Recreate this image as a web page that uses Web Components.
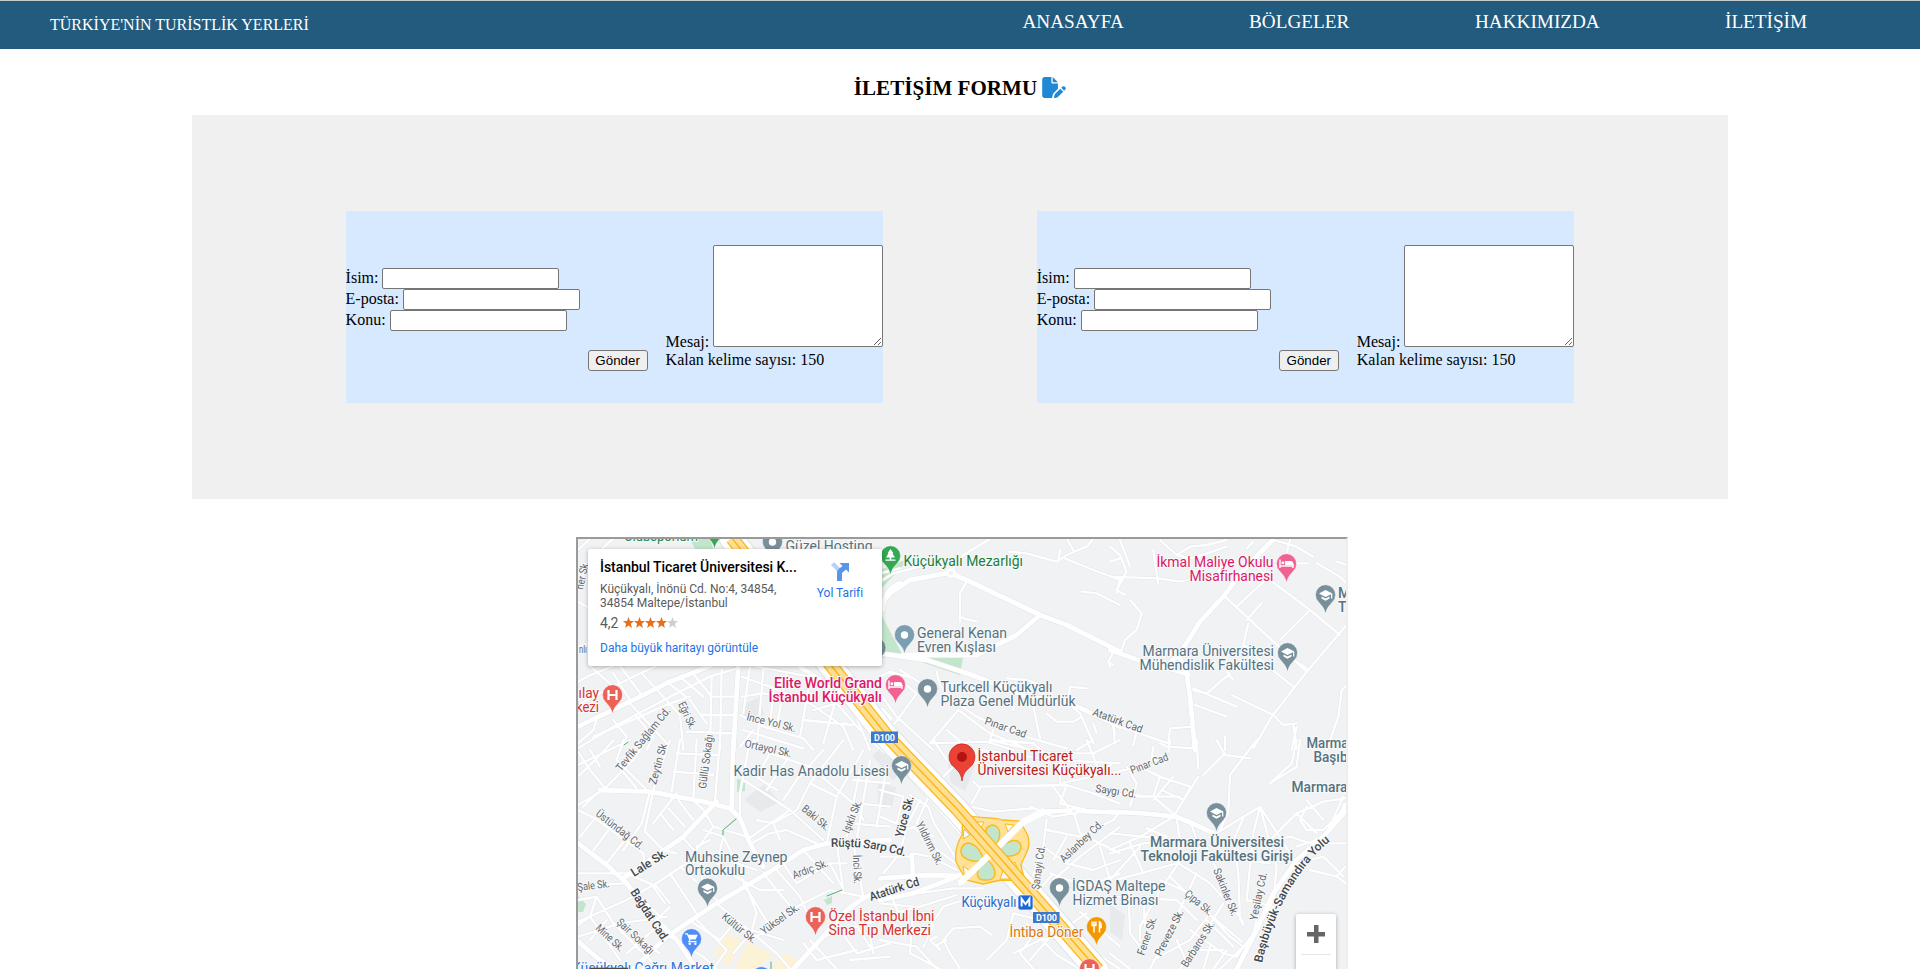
<!DOCTYPE html>
<html lang="tr">
<head>
<meta charset="utf-8">
<title>İletişim</title>
<style>
html,body{margin:0;padding:0;height:100%;overflow:hidden;background:#fff;font-family:"Liberation Serif",serif;font-size:16px}
</style>
</head>
<body>
<contact-page></contact-page>
<script>
const define = (name, html, setup) => customElements.define(name, class extends HTMLElement {
  connectedCallback() {
    if (this.shadowRoot) return;
    const t = document.createElement('template');
    t.innerHTML = typeof html === 'function' ? html(this) : html;
    this.attachShadow({ mode: 'open' }).appendChild(t.content.cloneNode(true));
    if (setup) setup(this);
  }
});

define('nav-link', `<style>:host{display:block}a{color:#fff;text-decoration:none;font-size:19.2px;line-height:22px;white-space:nowrap}</style><a><slot></slot></a>`);

define('site-header', `<style>
:host{display:flex;box-sizing:border-box;height:49px;background:#235b7e;border-top:1px solid #c4cccb;color:#fff;justify-content:space-between;align-items:flex-start}
.brand{margin:15px 0 0 50px;font-size:16px;line-height:18px;white-space:nowrap}
nav{display:grid;grid-template-columns:226.5px 226px 250px 195px;margin-top:10px}
</style><div class="brand">TÜRKİYE'NİN TURİSTLİK YERLERİ</div>
<nav><nav-link>ANASAYFA</nav-link><nav-link>BÖLGELER</nav-link><nav-link>HAKKIMIZDA</nav-link><nav-link>İLETİŞİM</nav-link></nav>`);

define('form-title', `<style>
:host{display:flex;justify-content:center;align-items:flex-start;gap:5px;height:66px;box-sizing:border-box;padding-top:27px}
h1{margin:0;font-size:21px;line-height:24px;font-weight:700;color:#000;letter-spacing:.05px}
svg{display:block;margin-top:1px}
</style><h1><slot></slot></h1>
<svg width="24" height="21" viewBox="0 0 576 512" fill="#2089d3"><path d="M0 64C0 29 29 0 64 0h160v128c0 18 14 32 32 32h128v126l-102 102a80 80 0 0 0-20 34l-19 74a30 30 0 0 0 1 16H64c-35 0-64-29-64-64z"/><path d="M256 0v128h128z"/><path d="M550 235c-16-15-41-15-57 0l-29 30 71 71 29-30c16-15 16-41 0-56zM312 417c-4 4-7 9-9 15l-15 60a16 16 0 0 0 20 20l60-15c6-1 11-4 15-9l130-129-72-71z"/></svg>`);

define('labeled-input', `<style>
:host{display:flex;height:21px;align-items:flex-start;line-height:18px}
input{box-sizing:border-box;width:177px;height:21px;margin:0 0 0 4px;border:1px solid #767676;border-radius:2px;background:#fff;padding:1px 2px;outline:none}
span{margin-top:1px}
</style><span><slot></slot></span><input>`);

define('contact-form', `<style>
:host{display:flex;width:537.6px;height:192px;background:#d7e9ff;color:#000;justify-content:space-between;flex:none}
.fields{margin-top:57px;width:236px}
button{box-sizing:border-box;width:60px;height:21px;margin:139px 0 0 6px;padding:0;border:1px solid #767676;border-radius:3px;background:#efefef;color:#000;font:13.333px/19px "Liberation Sans",sans-serif}
.msg{margin:34px 0 0 auto;width:217.6px}
.row{display:flex;justify-content:space-between;align-items:flex-end;height:102px}
.row span{line-height:18px;margin-bottom:-4px}
textarea{display:block;box-sizing:border-box;width:170px;height:102px;margin:0;border:1px solid #767676;border-radius:2px;background:#fff;resize:both;outline:none}
.left{line-height:18px;margin-top:4px;white-space:nowrap}
</style>
<div class="fields"><labeled-input>İsim:</labeled-input><labeled-input>E-posta:</labeled-input><labeled-input>Konu:</labeled-input></div>
<button>Gönder</button>
<div class="msg"><div class="row"><span>Mesaj:</span><textarea></textarea></div><div class="left">Kalan kelime sayısı: 150</div></div>`);

define('form-panel', `<style>
:host{display:flex;box-sizing:border-box;width:1536px;height:384px;margin:0 auto;background:#f0f0f0;justify-content:space-evenly;align-items:center}
</style><contact-form></contact-form><contact-form></contact-form>`);

/* Roads are traced in tiles: each tile has an origin on the page and a scale of three units per pixel. */
const tiles = [
 { o:[570,530], main:`M505,410L498,520L490,660 M24,590L200,505L300,455L420,408 M936,540L960,566 M690,410L810,490L880,570L960,670`,
   minor:`M24,125L80,70L130,26 M24,215L60,235 M60,26L24,60 M24,455L60,436L130,408 M24,525L80,495L210,430L260,408 M24,655L130,590L300,500L420,440L500,415 M60,408L130,470 M150,408L215,495 M215,430L330,555L340,660 M180,520L290,640 M290,455L360,510L410,580 M330,440L400,500 M365,425L425,500 M425,440L420,660 M455,420L450,660 M420,500L500,500 M300,520L360,500 M395,555L500,555 M350,605L495,610 M24,640L70,600L80,570 M180,510L130,430 M70,620L210,560L300,520 M560,410L720,440L850,540L900,660 M515,440L600,470L720,520L820,590L850,660 M515,500L580,490L650,500 M510,555L580,590L700,625L730,660 M520,600L700,655 M580,420L560,660 M650,430L620,590 M720,450L690,620 M800,500L760,640 M730,540L800,520L870,600 M700,570L850,585 M610,480L600,590 M510,650L550,600 M24,350L54,340 M130,570L170,620L150,660 M200,560L250,620L230,660 M860,530L910,620 M540,410L520,550` },
 { o:[880,530], main:`M0,225L30,190L90,150L210,128L260,150L480,255L560,285L720,365 M0,370L140,390L290,440L440,500L560,515L720,590 M480,255L410,315L290,375L70,375 M8,240Q10,180 60,160`,
   minor:`M330,26L250,75L215,125 M260,155L240,190L240,275 M240,262L290,275 M385,65L440,70L530,95L560,75L620,50L640,26 M540,60L535,95 M560,26L580,60 M555,85L640,120L720,150 M605,185L650,190L720,225 M690,95L720,85 M720,145L710,190 M700,365L685,395L690,410 M170,425L180,465L210,505L290,560L400,610L560,655 M30,425L60,450L110,490L60,560L20,610 M380,445L440,450L500,470 M460,530L480,625 M570,470L565,520L600,550L640,640 M570,470L620,475 M500,550L530,575L580,575L605,560 M640,580L650,610 M0,490L50,560L160,660 M0,540L100,660 M235,540L150,640L320,635L400,660 M235,540L330,610L450,660 M340,600L330,630L460,640 M200,600L260,650 M0,155L40,130L120,110 M0,130L60,115 M400,475L400,540 M60,420L170,490 M0,440L30,425L100,445 M700,590L705,640` },
 { o:[1110,530], main:`M490,28L400,120L340,200L270,275L210,370L180,400 M0,360L100,395L230,430L240,500L255,660 M210,385L235,435`,
   minor:`M0,50L30,75L50,125L20,180L45,195 M0,140L145,145L210,155L320,130L350,95 M130,60L135,100L145,160 M150,30L200,75L240,50L290,45L350,30 M200,75L240,85L290,70L350,50 M30,30L60,110 M60,210L95,250L80,300L45,330L35,360 M380,230L450,165L490,130 M345,200L490,335L590,425 M440,110L480,150L600,240L690,315 M600,240L510,330 M710,285L590,425L485,560L430,655 M410,270L455,220 M415,280L400,345L470,375 M490,335L550,390L590,415 M400,350L550,470 M250,475L380,530 M250,480L290,490L360,430 M365,495L490,555L520,585L560,580 M255,525L350,560 M550,585L560,655 M250,590L180,595L175,640L0,580 M10,590L15,610 M80,605L70,645 M150,640L170,650L255,655 M345,620L345,660 M710,465L695,480L685,560L650,660 M490,30L560,50L610,80 M540,30L530,70 M430,35L410,55 M620,100L690,140L710,160 M680,95L710,105 M350,425L370,450 M560,100L595,100 M0,400L10,405 M560,590L545,660` },
 { o:[570,740], main:`M24,310L110,375L170,430L240,520L320,600L380,687 M90,150L240,155L400,185L480,205L510,235L540,310L580,380 M440,185L340,290L160,415 M490,0L485,200 M960,300L770,310L700,330L600,395L440,490L290,590L190,687 M24,605L90,660L130,687 M960,435L880,475L830,510L760,590L670,687`,
   minor:`M24,110L100,35L130,0 M24,35L60,90L110,150 M24,75L180,0 M24,195L100,150L190,60L230,0 M24,210L75,235L220,340L225,390 M75,235L30,290 M120,265L70,330 M165,300L110,370 M40,200L80,160 M60,30L90,80 M160,0L140,60L230,150 M150,85L200,145 M240,155L215,250L160,330 M300,0L250,150L225,270 M320,160L250,250 M270,220L310,270 M225,275L280,330 M325,180L370,240 M295,205L345,260 M365,175L400,210 M380,0L370,170 M450,0L435,185 M320,40L440,45 M310,95L430,105 M330,0L305,155 M540,0L510,160L510,225 M520,120L600,170L660,210L760,300 M550,0L600,40L720,80L850,190L880,240 M600,40L560,110 M650,60L590,150 M700,90L640,180 M560,110L620,150 M760,30L690,110 M820,0L720,130L680,210 M880,30L800,170L770,310 M720,130L800,170 M660,210L530,300 M560,240L610,250L630,300 M610,250L680,210 M545,310L600,280L650,270L740,310 M400,210L430,260L350,370 M430,260L530,290 M400,270L460,290L500,370L560,390 M460,290L440,370L520,420 M340,295L390,350L400,460 M320,340L280,330 M380,320L420,300 M24,400L170,400L260,440L300,490 M24,440L160,430 M24,545L170,480L260,430L350,370 M24,480L80,470L130,550L260,680 M80,470L60,530L150,660 M24,555L60,530 M210,470L270,530L300,500 M160,420L260,520 M300,400L380,520 M250,440L285,490 M330,380L440,480 M440,490L500,540L620,640L660,687 M380,540L470,630L430,687 M300,590L400,650L440,687 M500,540L450,600L370,550 M550,570L490,640 M530,440L560,520L545,570L640,600 M580,400L620,450L680,520 M520,430L600,560 M440,380L570,450L640,450 M620,390L690,470L730,560 M560,590L640,520L780,450L880,470 M780,370L820,450 M700,330L790,430 M800,310L820,450 M850,310L880,470 M900,0L960,50 M870,90L830,290 M850,120L960,130 M860,190L960,200 M840,250L960,260 M900,60L860,300 M950,80L920,260 M640,370L680,430L780,370L830,370 M720,600L800,687 M760,590L860,560L960,530 M790,540L860,640L960,610 M830,510L900,620 M700,610L740,660L860,630 M24,590L150,550L290,530 M110,540L60,600 M170,640L250,570 M200,600L270,640 M840,660L960,650 M890,540L910,640` },
 { o:[880,740], main:`M240,430L350,325L430,245L490,215L570,212L720,218 M0,480L100,460L230,410L260,395 M0,415L150,405L230,408 M95,345L100,420`,
   minor:`M70,0L180,125L270,200L340,215L460,205 M0,20L60,80L160,190L240,280 M90,165L145,200L160,245L200,310L230,360 M280,125L300,145L275,190 M300,140L560,135L640,160L720,190 M0,150L70,170L50,250L0,230 M120,180L80,260L60,340 M40,290L100,260L160,320L240,380 M100,340L150,350L230,390 M150,160L110,250L160,290 M0,350L90,350 M60,340L10,400 M110,460L220,445L310,445 M0,530L120,500L230,465 M0,490L100,500L90,640L180,687 M0,600L110,620L170,687 M100,520L150,520L160,560L130,620 M250,480L190,500L150,560 M30,460L60,530 M200,600L170,615L180,630L150,600L170,590 M335,585L300,560L220,565L190,600L210,640L240,687 M320,660L380,600L400,520L560,560 M440,550L530,645L600,687 M400,640L480,600L540,590 M470,570L420,640L460,687 M510,590L450,660 M580,220L520,230L450,200 M500,240L490,320L450,430 M580,215L600,280L720,340 M500,270L600,290L700,240L720,215 M520,420L600,350L720,260 M490,320L560,370L640,390L720,360 M510,400L620,440L720,400 M470,460L520,400 M560,290L520,360 M620,280L560,370 M660,320L690,420 M560,135L540,190L640,215 M520,140L570,210 M300,30L520,60L720,70 M330,0L500,40L640,40L720,0 M590,30L640,0 M600,515L720,620 M560,560L620,520 M440,450L480,530L720,687 M210,60L270,0 M190,110L240,60 M200,60L160,0 M370,0L460,10L520,60 M540,70L540,130L640,110L700,70 M620,0L660,100 M590,630L640,687` },
 { o:[1110,740], main:`M0,215L100,220L200,230L280,265L320,285 M705,215L640,290L560,360L490,460L440,570L380,687 M705,195L690,230`,
   minor:`M320,280L400,230L450,200L560,370L640,350L670,380L700,410 M450,200L480,310L500,380L490,480L430,580L380,650 M400,235L370,300L385,400L390,540 M450,200L430,280L410,480L490,500 M500,300L540,290L600,310L650,280L700,170 M470,310L560,220L640,185L705,175 M590,200L570,240L590,270L640,270L690,220 M560,220L620,280 M590,180L640,240 M620,300L560,320 M650,310L705,310 M600,390L680,410L708,430 M705,380L680,410 M560,0L545,70L480,130 M480,130L560,80L570,0 M440,0L360,105L355,215L330,270 M345,40L280,105 M320,0L345,45L420,55 M260,0L265,85 M265,110L190,230L90,290L0,330 M0,100L90,80L150,110L240,140 M130,20L125,60L180,60 M150,110L130,170L0,160 M130,170L200,230 M155,150L220,180 M190,110L130,180 M80,170L210,170 M50,80L80,130L60,200 M240,145L220,180 M0,280L200,300 M200,235L210,300L205,370 M110,265L170,290 M240,240L260,300 M0,340L100,310L210,300 M0,420L90,320 M20,420L200,370L290,310 M60,310L100,400 M205,370L150,450L90,560L90,600 M205,370L300,430L390,530L400,550 M280,300L320,390L400,555 M150,420L240,460L360,590L400,620L330,687 M260,400L200,530L120,687 M180,410L260,490L395,605 M0,470L200,480L260,540 M55,440L60,580L90,620 M100,470L105,560 M340,490L270,600L210,687 M300,520L240,600L130,660 M200,600L240,687 M240,570L340,640L380,650 M290,540L370,620 M0,640L60,687 M300,620L280,687 M350,630L310,687 M260,630L340,630 M430,580L440,540 M480,370L400,360 M180,0L175,35 M500,510L430,500` }
];

const halo = 'paint-order="stroke" stroke="#f8f9fa" stroke-width="2.2" stroke-linejoin="round"';
const esc = s => s.replace(/&/g, '&amp;');
const label = (x, y, w, color, text, size = 14, weight = 400, rot = 0) =>
  `<text x="${x}" y="${y}" ${w ? `textLength="${w}" lengthAdjust="spacingAndGlyphs"` : ''} font-size="${size}" font-weight="${weight}" fill="${color}" ${halo} ${rot ? `transform="rotate(${rot} ${x} ${y})"` : ''}>${esc(text)}</text>`;
/* A street name runs from one point to another. */
const street = (x1, y1, x2, y2, text, bold) => {
  const w = Math.hypot(x2 - x1, y2 - y1), a = Math.atan2(y2 - y1, x2 - x1) * 180 / Math.PI;
  return label(x1, y1, w.toFixed(1), bold ? '#43474b' : '#63676b', text, bold ? 12 : 11, bold ? 500 : 400, +a.toFixed(1));
};
const glyphs = {
  dot: '<circle r="3.7" fill="#fff"/>',
  h: '<path d="M-4,-5V5M4,-5V5M-4,0H4" stroke="#fff" stroke-width="2.2" fill="none"/>',
  cap: '<path d="M0,-5L7,-1.5L0,2L-6.5,-1.5zM-4,1.4L0,3.4L4,1.4V3.6L0,5.8L-4,3.6zM5.6,-1H6.8V3.6H5.6z" fill="#fff"/>',
  bed: '<path d="M-6.5,-4.5V4M-6.5,2H6.5M6.5,4V0" stroke="#fff" stroke-width="1.4" fill="none"/><circle cx="-3.6" cy="-1.2" r="1.5" fill="#fff"/><path d="M-1.4,-3H4Q6.8,-3 6.8,0V1H-1.4z" fill="#fff"/>',
  tree: '<path d="M0,-7L3,-2.8H1.9L4.5,1.5H.8V3.5H5V4.8H-5V3.5H-.8V1.5H-4.5L-1.9,-2.8H-3z" fill="#fff"/>',
  cart: '<path d="M-3.800,-4.200H6.200L4.200,.6H-2z" fill="#fff"/><path d="M-6.500,-5.200H-4.200L-1.600,.8L-2.600,2.600H5" stroke="#fff" stroke-width="1.2" fill="none"/><circle cx="-1.800" cy="4.700" r="1.200" fill="#fff"/><circle cx="3.900" cy="4.700" r="1.200" fill="#fff"/>',
  fork: '<path d="M-4.4,-5.5V-1.5H-.6V-5.5M-2.5,-5.5V5.5M3,5.5V-5Q5,-4 4.6,.6H3" stroke="#fff" stroke-width="1.5" fill="none"/>',
  none: ''
};
const pin = (x, y, color, glyph) =>
  `<g transform="translate(${x} ${y})"><path d="M0,0C-1,-6 -4,-8.500 -7.200,-12.300A10,10 0 1 1 7.200,-12.300C4,-8.500 1,-6 0,0z" fill="${color}" stroke="#fff" stroke-opacity=".55" stroke-width=".8"/><g transform="translate(0 -19)">${glyphs[glyph]}</g></g>`;
const slate = '#78909c', ink = '#557280', pink = '#f06292', red = '#ec6158', rtext = '#d5352e', ptext = '#dd1868';

const mapSvg = () => {
  const pass = (key, color, width) => tiles.map(t => `<path transform="translate(${t.o}) scale(.33333)" d="${t[key]}" stroke="${color}" stroke-width="${width}"/>`).join('');
  const hw = 'M732,538L830,664L888,737L957,809L993,850L1037,900L1098,970';
  return `<svg width="768" height="430" viewBox="578 539 768 430" font-family="Roboto,sans-serif">
  <rect x="578" y="539" width="768" height="430" fill="#f1f2f4"/>
  <g fill="#e7e9ed"><path d="M742,705l18,-8 4,18 -20,4zM744,800l20,-16 16,18 -20,10zM872,755l18,-12 15,22 -12,16zM948,765l15,-17 12,18 -10,25 -14,-8zM878,783l18,4 -4,20 -14,-3zM1110,905l15,10 -3,25 -12,-8z"/></g>
  <g fill="#c3e5cb"><path d="M690,539h20l4,12h-18zM880,570l30,-12 -28,30zM882,616l20,38 -20,4zM903,656l60,2 -3,17zM737,779l8,2v10l-8,1zM578,896l8,8 -3,8h-5zM824,900l8,-4v7l-5,2zM816,868h5v3h-5z"/></g>
  <path d="M727,933l16,9 -14,24 -15,-12zM748,942l25,13 -16,14h-23zM778,960l8,-7 13,8 -9,8h-19z" fill="#fcf3d7"/>
  <g fill="none" stroke-linejoin="round" stroke-linecap="round">
    ${pass('minor','#e2e4e8',9.5)}${pass('main','#dfe1e5',17)}${pass('minor','#fff',7)}${pass('main','#fff',14.500)}
    <path d="M736,819l-13,11v5M842,890l-15,6M624,745l4,-3M771,962v7" stroke="#52ae67"/>
    <path d="${hw}" stroke="#dfe2e6" stroke-width="25" transform="translate(-1 0)"/>
    <path d="${hw}" stroke="#fff" stroke-width="23" transform="translate(-1 0)"/>
  </g>
  <path d="M963,814C980,820 994,816 1002,820L1020,821L1028,836C1032,850 1022,858 1021,866L1025,881L1001,880L983,884L966,880L956,862Q954,848 962,835z" fill="#ffe197" stroke="#fbbb1c" stroke-width="1.3"/>
  <g fill="#c3e5cb" stroke="#fbbb1c" stroke-width="1.5"><path d="M993,848C984,837 983,827 992,825C1000,825 1004,837 993,848z"/><path d="M995,852C1008,838 1020,838 1021,846C1021,857 1007,859 995,852z"/><path d="M984,860C972,864 960,858 961,850C964,838 978,842 984,860z"/><path d="M986,859C975,869 974,881 986,880C999,881 997,867 986,859z"/></g>
  <g fill="#f8f9fa" stroke="#fbbb1c" stroke-width="1"><path d="M972,822l12,0 -4,8zM1005,824l9,1 -6,7zM964,829l6,6 -7,4zM963,866l7,5 -5,7zM1003,871l8,8h-11zM1015,862l3,9 -8,-6z"/></g>
  <g fill="none">
    <path d="M960,883L997,848L1023,822L1045,811" stroke="#fff" stroke-width="6.5"/>
    <path d="${hw}" stroke="#f9b719" stroke-width="13.500"/><path d="${hw}" stroke="#ffdf91" stroke-width="11"/><path d="${hw}" stroke="#f9b719" stroke-width="1.4"/>
  </g>
  <circle cx="951" cy="573" r="3.500" fill="#f1f2f4" stroke="#fff" stroke-width="2.500"/><circle cx="1074" cy="811" r="3" fill="#f1f2f4" stroke="#fff" stroke-width="2.500"/>
  ${[
    [583,590,589,562,'ner Sk.'],[678,704,690,730,'Eğri Sk.'],[621,772,671,711,'Tevfik Sağlam Cd.'],[656,785,667,745,'Zeytin Sk'],[706,789,713,735,'Güllü Sokağı'],
    [746,720,795,732,'İnce Yol Sk.'],[744,747,791,757,'Ortayol Sk.'],[801,810,826,831,'Baki Sk.'],[849,834,862,802,'Işıklı Sk.'],[903,838,914,797,'Yüce Sk.',1],[916,824,937,866,'Yıldırım Sk.'],
    [853,855,854,884,'İnci Sk.'],[794,879,829,866,'Ardıç Sk.'],[871,901,920,885,'Atatürk Cd',1],[634,877,669,855,'Lale Sk.',1],[630,892,663,943,'Bağdat Cad.',1],
    [595,815,640,850,'Üstündağ Cd.'],[578,891,610,887,'Şale Sk.'],[616,923,650,955,'Şair Sokağı'],[595,929,620,952,'Mine Sk.'],[721,918,753,944,'Kültür Sk.'],[764,935,800,909,'Yüksel Sk.'],
    [984,724,1025,738,'Pınar Cad'],[1092,715,1141,733,'Atatürk Cad'],[1132,774,1169,760,'Pınar Cad'],[1095,792,1136,798,'Saygı Cd.'],[1064,863,1104,825,'Aslanbey Cd.'],[1039,890,1045,846,'Şanayi Cd.'],
    [1213,870,1232,917,'Sakinler Sk.'],[1257,921,1267,873,'Yeşilay Cd.'],[1184,895,1209,916,'Çıpa Sk.'],[1161,957,1184,912,'Preveze Sk.'],[1144,956,1157,918,'Fener Sk.'],[1187,968,1215,924,'Barbaros Sk.'],[579,653,587,653,'nlı']
  ].map(a => street(...a)).join('')}
  <path id="sarp" d="M831,847Q868,845 907,857" fill="none"/><text font-size="12" font-weight="500" fill="#43474b" ${halo}><textPath href="#sarp" textLength="75">Rüştü Sarp Cd.</textPath></text>
  <path id="yolu" d="M1262,963Q1272,918 1292,886T1333,839" fill="none"/><text font-size="12" font-weight="500" fill="#43474b" ${halo}><textPath href="#yolu" textLength="142">Başıbüyük-Samandıra Yolu</textPath></text>
  ${pin(876,667,slate,'none')}${pin(890.5,575,'#34a853','tree')}${pin(904.5,654,'#7b9eb0','dot')}${pin(927.5,708,slate,'dot')}${pin(895.5,704,pink,'bed')}
  ${pin(1286.5,583,pink,'bed')}${pin(1325.5,614,slate,'cap')}${pin(1287.5,672,slate,'cap')}${pin(612.5,714,red,'h')}${pin(772.5,561,slate,'dot')}${pin(714.5,549,'#34a853','none')}
  ${pin(901.5,785,slate,'cap')}${pin(707.5,907.5,slate,'cap')}${pin(815.5,936,red,'h')}${pin(691.5,958,'#4f8df7','cart')}${pin(761.5,996,'#4f8df7','none')}${pin(1059.5,907,slate,'dot')}
  ${pin(1096.5,946,'#f29900','fork')}${pin(1089.5,988,red,'h')}${pin(1216.5,832,slate,'cap')}
  <path d="M962,781C961,771 955,769 951.5,764.500A13,13 0 1 1 972.500,764.500C969,769 963,771 962,781z" fill="#ea4335" stroke="#c5221f" stroke-width=".7"/><circle cx="962" cy="757" r="5" fill="#b31412"/>
  ${label(624,541,74,'#248a43','Clubsporium')}${label(785.5,551,87,ink,'Güzel Hosting')}
  ${label(903.5,566,119.5,'#188038','Küçükyalı Mezarlığı')}
  ${label(917,638,90,ink,'General Kenan')}${label(917,652,79,ink,'Evren Kışlası')}
  ${label(940.5,691.5,112,ink,'Turkcell Küçükyalı')}${label(940.5,705.5,135,ink,'Plaza Genel Müdürlük')}
  ${label(774,688,108,ptext,'Elite World Grand',14,500)}${label(768.5,702,113.5,ptext,'İstanbul Küçükyalı',14,500)}
  ${label(1156.5,567,117,ptext,'İkmal Maliye Okulu')}${label(1189.5,581,84,ptext,'Misafirhanesi')}
  ${label(1142.5,656,131.5,ink,'Marmara Üniversitesi')}${label(1139.5,669.7,134.5,ink,'Mühendislik Fakültesi')}
  ${label(1338,597.5,0,ink,'M',14,500)}${label(1338,611.5,0,ink,'T',14,500)}
  ${label(1306.5,747.5,42,ink,'Marma',14,500)}${label(1313.5,761.5,34,ink,'Başıb',14,500)}${label(1291.500,792,56,ink,'Marmara',14,500)}
  ${label(1150,847,134,ink,'Marmara Üniversitesi',14,500)}${label(1140.5,861,152.5,ink,'Teknoloji Fakültesi Girişi',14,500)}
  ${label(1072,890.5,93.5,ink,'İGDAŞ Maltepe')}${label(1072.5,905,86,ink,'Hizmet Binası')}
  ${label(961.5,907,55,'#2b6ccb','Küçükyalı')}${label(1009.5,936.5,74,'#d87a0e','İntiba Döner')}
  ${label(977.5,760.5,95.5,'#b8201c','İstanbul Ticaret')}${label(977.5,774.5,144,'#b8201c','Üniversitesi Küçükyalı...')}
  ${label(733.5,776,155.500,ink,'Kadir Has Anadolu Lisesi')}${label(685,861.5,102.5,ink,'Muhsine Zeynep')}${label(685,875,60,ink,'Ortaokulu')}
  ${label(828.5,920.5,106,rtext,'Özel İstanbul İbni')}${label(828.5,934.5,102.5,rtext,'Sina Tıp Merkezi')}
  ${label(572,973,142,'#2b74df','Küçükyalı Çağrı Market')}${label(578.5,698,20.500,rtext,'ılay')}${label(576,712,23,rtext,'kezi')}
  <g fill="#3e78c9"><rect x="871" y="731.5" width="27" height="11.500"/><rect x="1033" y="912" width="26.500" height="11"/></g>
  <g fill="#fff" font-size="9" font-weight="700"><text x="874" y="740.500" textLength="21">D100</text><text x="1036" y="920.800" textLength="21">D100</text></g>
  <rect x="1018" y="895" width="15" height="15" rx="2.500" fill="#1a67dc" stroke="#fff" stroke-width=".7"/><path d="M1021.600,906.500V898.800L1025.500,904L1029.400,898.800V906.500" fill="none" stroke="#fff" stroke-width="2"/>
  <rect x="590" y="967.700" width="38" height="2" fill="#4b4942"/>
  </svg>`;
};

define('place-card', `<style>
:host{display:flex;box-sizing:border-box;width:294px;height:117px;background:#fff;border-radius:2px;box-shadow:0 1px 4px rgba(0,0,0,.3);padding:9px 9px 0 12px;justify-content:space-between;font-family:Roboto,sans-serif;color:#5b5b5b;white-space:nowrap}
.name{font-weight:500;font-size:14px;line-height:18px;letter-spacing:-.05px;color:#000}
.addr{font-size:12px;line-height:14px;margin-top:6px}
.rate{display:flex;gap:4px;align-items:center;font-size:14px;line-height:16px;margin-top:5px}
.rate svg{margin-top:-1px}
.more{font-size:12px;line-height:14px;margin-top:10px;color:#1a73e8}
.go{width:66px;display:flex;flex-direction:column;align-items:center;font-size:12px;line-height:14px;color:#1a73e8}
.go svg{margin:4px 0 5px}
</style>
<div><div class="name">İstanbul Ticaret Üniversitesi K...</div><div class="addr">Küçükyalı, İnönü Cd. No:4, 34854,<br>34854 Maltepe/İstanbul</div>
<div class="rate"><span>4,2</span><svg width="55" height="12" viewBox="0 0 55 12"><defs><path id="s" d="M5.500,0L7,3.900L11,4.100L7.900,6.700L8.900,10.900L5.500,8.600L2.100,10.900L3.100,6.700L0,4.100L4,3.900z"/></defs><g fill="#e7711b"><use href="#s"/><use href="#s" x="11"/><use href="#s" x="22"/><use href="#s" x="33"/></g><use href="#s" x="44" fill="#cfcfcf"/></svg></div>
<div class="more">Daha büyük haritayı görüntüle</div></div>
<div class="go"><svg width="20" height="19" viewBox="0 0 20 19"><path d="M1,3L4,0L11,7L8,10z" fill="#b8d1f7"/><path d="M7,19V10Q7,8 9,6.800L12.500,4L9.500,1H19V10.500L16,7.500L12,11V19z" fill="#5996ea"/></svg><span>Yol Tarifi</span></div>`);

define('zoom-control', `<style>
:host{display:flex;flex-direction:column;align-items:center;width:40px;height:81px;background:#fff;border-radius:2px;box-shadow:0 1px 4px rgba(0,0,0,.3)}
i{display:block}.plus{width:18px;height:18px;margin-top:11px;background:linear-gradient(#666,#666) center/18px 4.5px no-repeat,linear-gradient(#666,#666) center/4.5px 18px no-repeat}
.line{width:30px;height:1px;background:#e6e6e6;margin-top:11px}
</style><i class="plus"></i><i class="line"></i>`);

define('map-frame', () => `<style>
:host{display:block;position:relative;box-sizing:border-box;width:772px;height:604px;margin:38px 0 0 576px;border:2px solid;border-color:#9a9a9a #eee #eee #9a9a9a;overflow:hidden;background:#f1f2f4}
svg{display:block}
place-card{position:absolute;left:10px;top:10px}
zoom-control{position:absolute;left:718px;top:375px}
</style>${mapSvg()}<place-card></place-card><zoom-control></zoom-control>`);

define('contact-page', `<style>:host{display:block;width:1920px;height:969px;overflow:hidden}</style>
<site-header></site-header><form-title>İLETİŞİM FORMU</form-title><form-panel></form-panel><map-frame></map-frame>`);
</script>
</body>
</html>
